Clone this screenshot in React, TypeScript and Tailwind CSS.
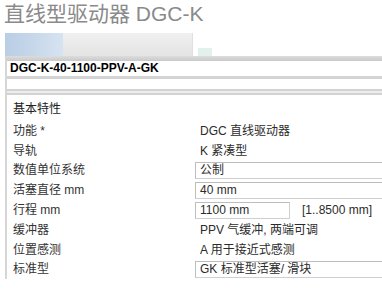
import React from 'react';

/* ─── Data ─── */

type Row = {
  label: string;
  value: string;
  kind?: 'text' | 'input' | 'short';
  hint?: string;
};

const rows: Row[] = [
  { label: '功能 *', value: 'DGC 直线驱动器' },
  { label: '导轨', value: 'K 紧凑型' },
  { label: '数值单位系统', value: '公制', kind: 'input' },
  { label: '活塞直径 mm', value: '40 mm', kind: 'input' },
  { label: '行程 mm', value: '1100 mm', kind: 'short', hint: '[1..8500 mm]' },
  { label: '缓冲器', value: 'PPV 气缓冲, 两端可调' },
  { label: '位置感测', value: 'A 用于接近式感测' },
  { label: '标准型', value: 'GK 标准型活塞/ 滑块', kind: 'input' },
];

/* ─── Value cell ─── */

function ValueCell({ row }: { row: Row }) {
  if (row.kind === 'input') {
    return (
      <div className="flex-1 -mr-[10px] h-[17px] flex items-center pl-[4px] border border-[#cfcfcf] border-t-[#bdbdbd] border-l-[#bdbdbd] bg-white">
        {row.value}
      </div>
    );
  }
  if (row.kind === 'short') {
    return (
      <div className="flex items-center">
        <div className="w-[95px] h-[17px] flex items-center pl-[4px] border border-[#cfcfcf] border-t-[#bdbdbd] border-l-[#bdbdbd] bg-white">
          {row.value}
        </div>
        <span className="ml-[12px]">{row.hint}</span>
      </div>
    );
  }
  return <div className="pl-[5px]">{row.value}</div>;
}

/* ─── Main ─── */

export default function App() {
  return (
    <div
      className="w-[382px] h-[289px] overflow-hidden bg-white text-[12px] text-[#2b2b2b]"
      style={{ fontFamily: '"Liberation Sans", "Noto Sans CJK SC", sans-serif' }}
    >
      {/* Title */}
      <div className="h-[33px] pl-[4px] pt-[1px] text-[21px] leading-[26px] text-[#8a8a8a] whitespace-nowrap">
        直线型驱动器 DGC-K
      </div>

      {/* Tab strip */}
      <div className="h-[23px] ml-[5px] flex items-stretch">
        <div className="w-[58px] bg-gradient-to-r from-[#b9cde4] to-[#d6e3f1]" />
        <div className="w-[129px] bg-gradient-to-b from-[#f0f0f0] to-[#e4e4e4]" />
        <div className="w-[6px] border-l border-[#e0e0e0]" />
        <div className="w-[14px] mt-[15px] bg-[#e2f1ec]" />
      </div>

      {/* Panel */}
      <div className="ml-[5px] border-l-2 border-[#d6d6d6]">
        <div className="h-[5px] bg-gradient-to-b from-[#dcdcdc] to-[#c9c9c9]" />
        <div className="h-[14px] pl-[3px] flex items-center font-bold text-[12px] text-black whitespace-nowrap">
          DGC-K-40-1100-PPV-A-GK
        </div>
        <div className="h-[3px] mt-[1px] bg-[#d4d4d4]" />
        <div className="h-[10px]" />
        <div className="h-[6px] border-t-2 border-b-2 border-[#d2d2d2] bg-[#ececec]" />

        {/* Section header */}
        <div className="h-[22px] pl-[6px] pt-[6px] text-[#222] leading-[16px]">基本特性</div>

        {/* Rows */}
        <div className="mt-[4px]">
          {rows.map((r, i) => (
            <div key={i} className="h-[19.8px] flex items-center whitespace-nowrap">
              <div className="w-[188px] pl-[6px] text-[#333]">{r.label}</div>
              <ValueCell row={r} />
            </div>
          ))}
        </div>
      </div>
    </div>
  );
}
